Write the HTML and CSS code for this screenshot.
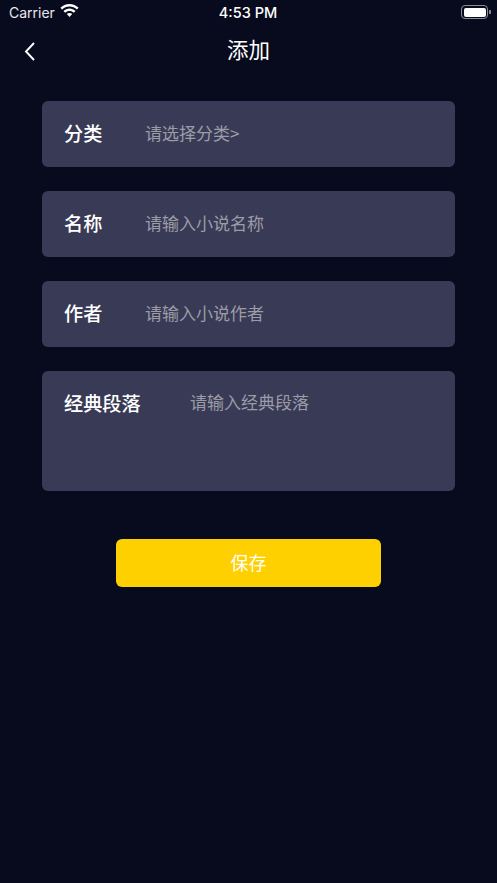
FILE: index.html
```html
<!DOCTYPE html>
<html lang="zh-CN">
<head>
<meta charset="utf-8">
<title>添加</title>
<link rel="stylesheet" href="styles.css">
</head>
<body>
<div class="screen">
  <div class="status">
    <div class="status-left">
      <span class="carrier">Carrier</span>
      <svg class="wifi" width="19" height="14" viewBox="0 0 19 14"><path d="M9.500 0C6 0 2.800 1.400.4 3.700l1.700 1.800C4 3.600 6.600 2.500 9.500 2.500s5.500 1.100 7.400 3l1.700-1.800C16.200 1.400 13 0 9.500 0z" fill="#fff"/><path d="M9.500 4.500c-2.300 0-4.400.9-6 2.400l1.700 1.800c1.100-1.100 2.600-1.700 4.300-1.700s3.200.6 4.300 1.700l1.700-1.800c-1.600-1.500-3.700-2.400-6-2.400z" fill="#fff"/><path d="M9.500 9c-1.100 0-2 .4-2.700 1.100l2.700 3 2.700-3C11.500 9.400 10.600 9 9.500 9z" fill="#fff"/></svg>
    </div>
    <span class="time">4:53 PM</span>
    <div class="battery"><span class="battery-level"></span></div>
  </div>
  <header class="nav">
    <svg class="back" width="12" height="20" viewBox="0 0 12 20"><path d="M10 2 2 10.500l8 8.500" fill="none" stroke="#fff" stroke-width="1.900"/></svg>
    <h1 class="title">添加</h1>
  </header>
  <main class="form">
    <div class="field"><span class="label">分类</span><span class="hint">请选择分类&gt;</span></div>
    <div class="field"><span class="label">名称</span><span class="hint">请输入小说名称</span></div>
    <div class="field"><span class="label">作者</span><span class="hint">请输入小说作者</span></div>
    <div class="field field-tall"><span class="label">经典段落</span><span class="hint">请输入经典段落</span></div>
    <button class="save" type="button">保存</button>
  </main>
</div>
</body>
</html>
```
FILE: styles.css
```css
* { box-sizing: border-box; }
html, body { margin: 0; padding: 0; height: 100%; }
body {
  background: #080b1e;
  color: #fff;
  font-family: "Inter", "Noto Sans CJK SC", sans-serif;
}
.screen { width: 497px; height: 883px; overflow: hidden; }
.status {
  height: 26px;
  padding: 0 9px 2px 9px;
  display: grid;
  grid-template-columns: 1fr auto 1fr;
  align-items: center;
}
.status-left { display: flex; align-items: center; gap: 5px; }
.carrier { font-size: 14px; color: #e8e8ec; }
.wifi { margin-top: -2px; }
.time { font-size: 14.500px; font-weight: 500; margin-left: -1px; }
.battery {
  justify-self: end;
  width: 27px;
  height: 14px;
  border: 1.200px solid #8a8b95;
  border-radius: 4px;
  padding: 1.500px;
  position: relative;
}
.battery::after {
  content: "";
  position: absolute;
  right: -3.500px;
  top: 3.500px;
  width: 2px;
  height: 4.500px;
  background: #8a8b95;
  border-radius: 0 1px 1px 0;
}
.battery-level { display: block; height: 100%; background: #fff; border-radius: 2px; }
.nav {
  height: 50px;
  padding-bottom: 4px;
  position: relative;
  display: flex;
  align-items: center;
  justify-content: center;
}
.back { position: absolute; left: 24px; top: 15px; }
.title {
  margin: 0;
  font-size: 21.500px;
  font-weight: 400;
  line-height: 1;
  font-family: "Noto Sans CJK SC", sans-serif;
}
.form {
  padding: 25px 42px 0;
  display: flex;
  flex-direction: column;
  gap: 24px;
  font-family: "Noto Sans CJK SC", sans-serif;
}
.field {
  height: 66px;
  background: #393a56;
  border-radius: 6px;
  padding: 0 22px 2px;
  display: flex;
  align-items: center;
  gap: 42.600px;
}
.field-tall {
  height: 120px;
  align-items: flex-start;
  padding-top: 18px;
  gap: 49.200px;
}
.label { font-size: 19.200px; font-weight: 500; line-height: 28px; white-space: nowrap; }
.hint { font-size: 17px; color: #9c9ca6; line-height: 28px; white-space: nowrap; }
.field-tall .hint { margin-top: -1px; }
.save {
  align-self: center;
  width: 265px;
  height: 48px;
  margin-top: 24px;
  border: 0;
  border-radius: 6px;
  background: #ffd000;
  color: #fff;
  font-family: inherit;
  font-size: 18px;
  line-height: 24px;
  padding: 0 0 2px;
}
```
